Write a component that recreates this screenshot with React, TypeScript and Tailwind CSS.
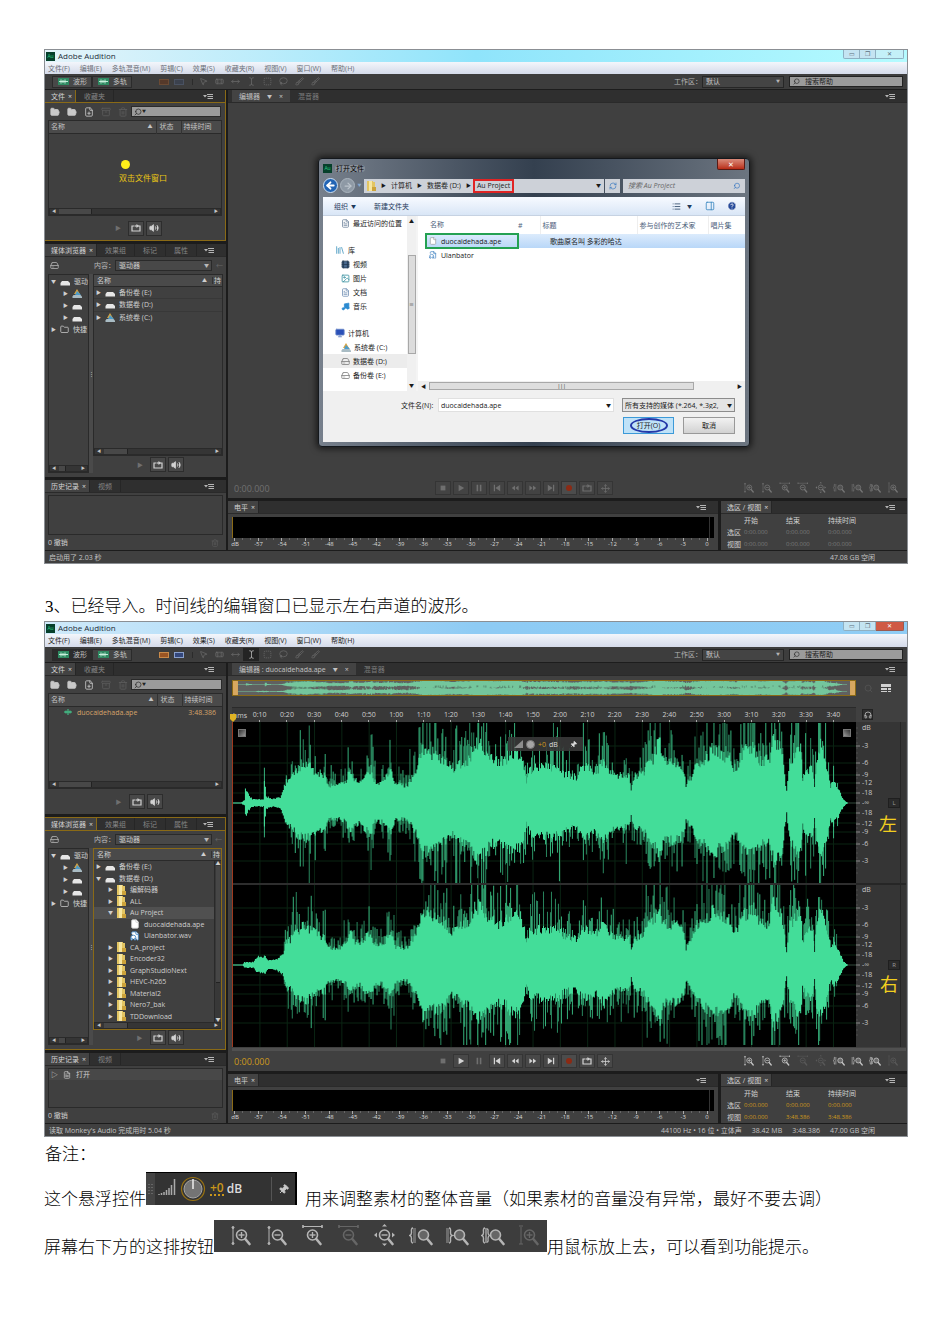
import type { ReactNode } from "react";
import {
  Archive, File, FileAudio, Folder, FolderOpen, HardDrive, Headphones, Image,
  Film, FileText, Monitor, Music, Pin, Trash2, Volume2, Search, HelpCircle, List, PanelRight,
  ArrowLeft, ArrowRight, RefreshCw, Library, Lasso, Brush, Bandage, TextCursor, Move,
  SquareDashed, MoveHorizontal, FilePlus, MousePointer2,
} from "lucide-react";

/* ---------- waveform ---------- */

type Point = [number, number];

const LEFT_ENVELOPE: Point[] = [
  [0, 0], [8, 0], [12, 3], [13, 15], [16, 9], [20, 4], [31, 4], [32, 27], [34, 7], [40, 4], [48, 6], [51, 14],
  [54, 24], [58, 27], [65, 36], [72, 42], [78, 38], [86, 32], [93, 30], [96, 18], [108, 19], [114, 22], [118, 37],
  [122, 26], [128, 22], [133, 30], [139, 36], [142, 22], [150, 22], [159, 34], [164, 20], [175, 18], [180, 27],
  [185, 36], [191, 58], [198, 54], [210, 48], [219, 36], [222, 36], [232, 44], [237, 45], [243, 62], [252, 60],
  [258, 50], [265, 44], [275, 47], [280, 54], [288, 54], [293, 36], [295, 22], [298, 36], [315, 38], [328, 38],
  [332, 31], [345, 28], [352, 38], [365, 34], [373, 44], [377, 34], [382, 30], [398, 28], [400, 15], [403, 28],
  [412, 32], [417, 41], [423, 49], [428, 66], [432, 45], [448, 42], [453, 35], [455, 18], [460, 28], [465, 41],
  [472, 46], [483, 58], [492, 50], [498, 50], [503, 37], [506, 38], [512, 54], [523, 58], [528, 46], [538, 45],
  [543, 68], [551, 55], [554, 30], [556, 12], [559, 42], [570, 60], [572, 25], [576, 36], [582, 36], [584, 15],
  [586, 50], [590, 60], [597, 35], [600, 18], [603, 24], [608, 15], [613, 4], [617, 0], [626, 0],
];

const RIGHT_ENVELOPE: Point[] = [
  [0, 0], [10, 0], [12, 3], [21, 3], [25, 9], [33, 9], [36, 5], [44, 6], [50, 10], [53, 20],
  ...LEFT_ENVELOPE.filter(([x]) => x > 53),
];

function levelAt(points: Point[], x: number) {
  const next = points.findIndex(([px]) => px > x);
  if (next <= 0) return 0;
  const [x0, y0] = points[next - 1];
  const [x1, y1] = points[next];
  return y0 + ((y1 - y0) * (x - x0)) / (x1 - x0);
}

function randomSource(seed: number) {
  let s = seed;
  return () => {
    s = (s * 1664525 + 1013904223) % 4294967296;
    return s / 4294967296;
  };
}

function wavePaths(points: Point[], middle: number, limit: number, seed: number) {
  const rnd = randomSource(seed);
  let core = "";
  let bright = "";
  let dim = "";
  for (let x = 0; x < 618; x++) {
    const level = (levelAt(points, x) * limit) / 80;
    const loud = level > limit * 0.19;
    const up = Math.max(0.4, level * (0.8 + rnd() * 0.28));
    const down = Math.max(0.4, level * (0.74 + rnd() * 0.26));
    core += `M${x + 0.5} ${(middle - up).toFixed(1)}V${(middle + down).toFixed(1)}`;
    if (loud && rnd() < 0.52) {
      const reach = rnd() < 0.3 ? 1.2 : 0.7;
      const a = Math.min(limit, up * (1.1 + rnd() * reach));
      const b = Math.min(limit, down * (1.1 + rnd() * reach));
      const seg = `M${x + 0.5} ${(middle - a).toFixed(1)}V${(middle + b).toFixed(1)}`;
      if (rnd() < 0.5) bright += seg;
      else dim += seg;
    }
  }
  return { core, bright, dim };
}

const LEFT_WAVE = wavePaths(LEFT_ENVELOPE, 81, 80, 11);
const RIGHT_WAVE = wavePaths(RIGHT_ENVELOPE, 243, 80, 57);
const LEFT_MINI = wavePaths(LEFT_ENVELOPE, 4, 7, 5);
const RIGHT_MINI = wavePaths(RIGHT_ENVELOPE, 12, 7, 9);

function Wave({ wave, color, shade }: { wave: { core: string; bright: string; dim: string }; color: string; shade: string }) {
  return (
    <g strokeWidth="1.05" fill="none">
      <path d={wave.dim} stroke={shade} />
      <path d={wave.bright} stroke={color} strokeWidth="0.8" />
      <path d={wave.core} stroke={color} />
    </g>
  );
}

const GRID_OFFSETS = [-57, -40, -28, -20, -10, 10, 20, 29, 41, 58];

function WaveDisplay() {
  const columns = Array.from({ length: 22 }, (_, i) => 28 + i * 27.4);
  return (
    <svg viewBox="0 0 626 325" preserveAspectRatio="none" className="block h-[325px] w-full bg-black" role="img" aria-label="波形">
      <g stroke="#0a2413" strokeWidth="1">
        {columns.map((x) => <path key={x} d={`M${x} 0V325`} />)}
        {[81, 243].map((m) => GRID_OFFSETS.map((o) => <path key={m + o} d={`M0 ${m + o}H626`} />))}
      </g>
      <path d="M0 81H626M0 243H626" stroke="#4a6a58" strokeWidth="0.7" />
      <Wave wave={LEFT_WAVE} color="#43dd99" shade="#27805a" />
      <Wave wave={RIGHT_WAVE} color="#43dd99" shade="#27805a" />
      <path d="M0 162H626" stroke="#2e2e2e" strokeWidth="2" />
      <path d="M0.5 0V325" stroke="#a03a20" strokeWidth="1" />
    </svg>
  );
}

const SCALE: [string, number][] = [
  ["dB", 6], ["-3", 24], ["-6", 41], ["-9", 53], ["-12", 61], ["-18", 71], ["-∞", 81], ["-18", 91], ["-12", 102], ["-9", 110], ["-6", 122], ["-3", 139],
];

function AmplitudeScale() {
  return (
    <svg viewBox="0 0 50 325" className="block h-[325px] w-[50px] bg-[#353535]" role="img" aria-label="dB">
      {[0, 162].map((base) => (
        <g key={base}>
          {SCALE.map(([t, y]) => (
            <g key={y}>
              {t !== "dB" && <path d={`M0 ${base + y}H4`} stroke="#8a8a8a" />}
              <text x="6" y={base + y + 2} fontSize="7" fill="#c8c8c8">{t}</text>
            </g>
          ))}
          {Array.from({ length: 30 }, (_, i) => <path key={i} d={`M0 ${base + 6 + i * 5}H2`} stroke="#5d5d5d" strokeWidth="0.6" />)}
        </g>
      ))}
      <path d="M0 162H50" stroke="#262626" strokeWidth="2" />
      <path d="M44.500 0V325" stroke="#262626" />
    </svg>
  );
}

/* ---------- zoom icons ---------- */

const ZOOM_KINDS = ["inV", "outV", "inH", "outH", "full", "selL", "selR", "sel", "reset"] as const;
type ZoomKind = (typeof ZOOM_KINDS)[number];

const ZOOM_TITLES: Record<ZoomKind, string> = {
  inV: "放大振幅", outV: "缩小振幅", inH: "放大时间", outH: "缩小时间", full: "全部缩小",
  selL: "放大入点", selR: "放大出点", sel: "缩放至选区", reset: "重置",
};

function ZoomGlyph({ kind, className }: { kind: ZoomKind; className: string }) {
  const shift = kind === "selL" || kind === "selR" || kind === "sel" ? 3 : kind === "inV" || kind === "outV" || kind === "reset" ? 1 : 0;
  const plus = kind === "inV" || kind === "inH" || kind === "reset";
  const minus = plus || kind === "outV" || kind === "outH" || kind === "full";
  return (
    <svg viewBox="0 0 24 24" className={className} fill="none" stroke="currentColor" aria-hidden="true">
      <g transform={`translate(${shift} 0)`}>
        <circle cx="11.500" cy="11" r="5" strokeWidth="1.600" fill={minus ? "none" : "currentColor"} fillOpacity="0.35" />
        <path d="M15.300 15L19.500 20" strokeWidth="2.600" strokeLinecap="round" />
        {minus && <path d="M8.500 11H14.500" strokeWidth="1.400" />}
        {plus && <path d="M11.500 8V14" strokeWidth="1.400" />}
      </g>
      {(kind === "inV" || kind === "outV") && (
        <g><path d="M4 3V20" strokeWidth="1" /><circle cx="4" cy="3.500" r="1" fill="currentColor" /><circle cx="4" cy="19.500" r="1" fill="currentColor" /></g>
      )}
      {(kind === "inH" || kind === "outH") && (
        <g><path d="M2 2.500H21" strokeWidth="1" /><path d="M2 1V4M21 1V4" strokeWidth="1.600" /></g>
      )}
      {kind === "reset" && <path d="M4 3V20M2 2H6M2 20H6" strokeWidth="1" />}
      {kind === "full" && (
        <g fill="currentColor" stroke="none"><path d="M11.500 0L14 2.500H9ZM11.500 22L14 19.500H9ZM1 11L4 8.500V13.500ZM22 11L19 8.500V13.500Z" /></g>
      )}
      {(kind === "selL" || kind === "sel") && <path d="M4 4Q2 4 2.500 8Q2.700 11 0.800 11.500Q2.700 12 2.500 15Q2 19 4 19" strokeWidth="1.400" />}
      {kind === "selL" && <path d="M4 4H7V19H4Z" fill="currentColor" fillOpacity="0.4" stroke="none" />}
      {kind === "selR" && (
        <g><path d="M1 4H4V19H1Z" fill="currentColor" fillOpacity="0.4" stroke="none" /><path d="M4 4Q6 4 5.500 8Q5.300 11 7.200 11.500Q5.300 12 5.500 15Q6 19 4 19" strokeWidth="1.400" /></g>
      )}
      {kind === "sel" && <path d="M5 4V19M6 5Q7.500 5 7 8Q7 11 8.600 11.500Q7 12 7 15Q7.500 18 6 18" strokeWidth="1.300" />}
    </svg>
  );
}

/* ---------- small shared parts ---------- */

function PanelMenu() {
  return (
    <svg viewBox="0 0 10 6" className="h-[6px] w-[10px] shrink-0" fill="#b5b5b5" aria-hidden="true">
      <path d="M0 2H4L2 4.500ZM4 1H10V2H4ZM4.500 3H10V4H4.500ZM4.500 5H10V6H4.500Z" />
    </svg>
  );
}

function TabBar({ tabs, active = false }: { tabs: string[]; active?: boolean }) {
  return (
    <div className={`flex h-[13px] shrink-0 items-stretch border-b bg-[#2f2f2f] ${active ? "border-[#8a6a16]" : "border-[#2a2a2a]"}`}>
      {tabs.map((t, i) => (
        <button
          key={t}
          type="button"
          className={`flex items-center whitespace-nowrap border-r leading-none ${
            i === 0
              ? `bg-[#434343] pl-[6px] pr-[3px] text-[#d4d4d4] ${active ? "border-[#8a6a16]" : "border-[#262626]"}`
              : "border-[#262626] px-[8px] text-[#858585]"
          }`}
        >
          {t}
          {i === 0 && <span className="pl-[3px]">×</span>}
        </button>
      ))}
      <div className="flex flex-1 items-center justify-end pr-[12px]"><PanelMenu /></div>
    </div>
  );
}

function HScroll() {
  return (
    <div className="flex h-[7px] shrink-0 items-center justify-between border border-[#2a2a2a] bg-[#353535] px-[2px] text-[4px] leading-none text-[#c4c4c4]">
      <span>◀</span>
      <span className="ml-[3px] h-[5px] w-1/5 border-r border-[#222] bg-[#484848]" />
      <span className="flex-1 text-right">▶</span>
    </div>
  );
}

function PreviewButtons() {
  const box = "flex h-[15px] w-[16px] items-center justify-center border border-[#2d2d2d] bg-[#484848] text-[#d2d2d2]";
  return (
    <div className="flex items-center gap-[2px]">
      <button type="button" aria-label="播放" className="flex h-[15px] w-[16px] items-center justify-center text-[6px] text-[#6f6f6f]">▶</button>
      <button type="button" aria-label="循环播放" className={box}><LoopGlyph /></button>
      <button type="button" aria-label="自动播放" className={box}><Volume2 size={10} fill="currentColor" /></button>
    </div>
  );
}

function LoopGlyph() {
  return (
    <svg viewBox="0 0 10 8" className="h-[8px] w-[10px]" fill="none" stroke="currentColor" strokeWidth="1.200" aria-hidden="true">
      <path d="M3 2H1V7H9V2H7" /><path d="M3.500 2H6" /><path d="M5.500 0L8 2L5.500 4Z" fill="currentColor" stroke="none" />
    </svg>
  );
}

function DriveGlyph({ system = false }: { system?: boolean }) {
  return (
    <svg viewBox="0 0 10 9" className="h-[9px] w-[10px] shrink-0" aria-hidden="true">
      {system && <path d="M2 5L5 0L8 5Z" fill="#d9a441" />}
      {system && <path d="M5 2L9 6H3Z" fill="#4d9cc9" />}
      <path d={system ? "M1.500 6H8.500L10 7.500V9H0.500V7.500Z" : "M2 4H8L10 6V8.500H0.500V6Z"} fill={system ? "#a9bcc4" : "#e6e6e6"} />
    </svg>
  );
}

function FolderGlyph() {
  return (
    <svg viewBox="0 0 9 10" className="h-[10px] w-[9px] shrink-0" aria-hidden="true">
      <path d="M0 0H6V1H8V10H0Z" fill="#e3c562" /><path d="M2 0H5V10H2Z" fill="#f6e6a2" /><path d="M5 6H9V10H5Z" fill="#cda33a" />
    </svg>
  );
}

function AuLogo() {
  return <span className="flex size-[9px] shrink-0 items-center justify-center bg-[#06402b] text-[5px] leading-none text-[#2fd08a]">Au</span>;
}

/* ---------- window chrome ---------- */

const MENUS = ["文件(F)", "编辑(E)", "多轨混音(M)", "剪辑(C)", "效果(S)", "收藏夹(R)", "视图(V)", "窗口(W)", "帮助(H)"];

function TitleBar({ loaded }: { loaded: boolean }) {
  return (
    <div className={`flex h-[12px] items-center gap-[3px] pl-[1px] text-[8px] leading-none text-[#1c2c38] ${
      loaded ? "bg-linear-to-r from-[#cfeafa] via-[#8ecbf4] to-[#8fcdf5]" : "bg-linear-to-r from-[#e4f4fa] via-[#8fe4fb] to-[#b5fbff]"
    }`}>
      <AuLogo />
      <span className="flex-1">Adobe Audition</span>
      <div className="flex h-[9px] self-start pr-[3px] text-[6px] leading-none text-[#5c6e7c]">
        <button type="button" aria-label="最小化" className="w-[17px] rounded-bl-[2px] border border-t-0 border-[#8fb0c2] bg-[#c4e4f2]">▭</button>
        <button type="button" aria-label="还原" className="w-[16px] border border-l-0 border-t-0 border-[#8fb0c2] bg-[#c4e4f2]">❐</button>
        <button type="button" aria-label="关闭" className={`w-[28px] rounded-br-[2px] border border-l-0 border-t-0 ${loaded ? "border-[#9a5a50] bg-[#cf5a45] text-white" : "border-[#8fb0c2] bg-[#c4f0f8]"}`}>✕</button>
      </div>
    </div>
  );
}

function MenuBar({ loaded }: { loaded: boolean }) {
  return (
    <nav className={`flex items-center gap-[10px] bg-linear-to-b from-[#f3f6fb] to-[#d5dbea] pl-[3px] ${loaded ? "h-[13px] text-[#1c1c1c]" : "h-[12px] text-[#6c7078]"}`}>
      {MENUS.map((m) => <button key={m} type="button" className="whitespace-nowrap leading-none">{m}</button>)}
    </nav>
  );
}

function WaveGlyph() {
  return (
    <svg viewBox="0 0 11 7" className="h-[7px] w-[11px]" aria-hidden="true">
      <path d="M0 0H11V7H0Z" fill="#2f8a62" /><path d="M1 3.500H10M3 1.500V5.500M5 2V5M7 1.500V5.500" stroke="#d4f5e4" strokeWidth="0.9" />
    </svg>
  );
}

function Toolbar({ loaded }: { loaded: boolean }) {
  const tools = [MousePointer2, Bandage, MoveHorizontal, TextCursor, SquareDashed, Lasso, Brush, Brush];
  const mode = "flex h-[12px] items-center gap-[4px] border border-[#2b2b2b] pl-[5px] pr-[4px] leading-none text-[#c4c4c4]";
  return (
    <div className="flex h-[16px] items-center border-b border-[#1d1d1d] bg-[#3d3d3d] pl-[7px] pr-[4px]">
      <button type="button" className={`${mode} ${loaded ? "bg-[#2c2c2c]" : "bg-[#484848]"}`}><WaveGlyph />波形</button>
      <button type="button" className={`${mode} bg-[#444]`}><WaveGlyph />多轨</button>
      <div className="ml-[27px] flex w-[34px] items-center gap-[5px] border-r border-[#2b2b2b]">
        <span className={`h-[6px] w-[10px] border ${loaded ? "border-[#c98a4a] bg-[#9b5524]" : "border-[#6a4a34] bg-[#55392a]"}`} />
        <span className={`h-[6px] w-[10px] border ${loaded ? "border-[#8aa0cc] bg-[#33477c]" : "border-[#4a5262] bg-[#3b414d]"}`} />
      </div>
      <div className="ml-[2px] flex items-center text-[#6a6a6a]">
        {tools.map((T, i) => (
          <button key={i} type="button" aria-label={`工具 ${i + 1}`} className={`flex h-[13px] w-[16px] items-center justify-center ${loaded && i === 3 ? "bg-[#242424] text-[#bbb]" : ""}`}><T size={9} /></button>
        ))}
      </div>
      <label className="ml-auto flex items-center leading-none text-[#b5b5b5]">
        工作区：
        <span className="relative flex w-[82px] items-center">
          <select className="h-[12px] w-full appearance-none border border-[#262626] bg-[#444] px-[3px] leading-none text-[#c8c8c8]"><option>默认</option></select>
          <span className="pointer-events-none absolute right-[4px] text-[4px]">▼</span>
        </span>
      </label>
      <label className="ml-[5px] flex h-[11px] w-[114px] items-center gap-[5px] border border-[#222] bg-[#9b9b9b] px-[3px] text-[#222]">
        <Search size={7} className="shrink-0 -scale-x-100" />
        <input aria-label="搜索帮助" placeholder="搜索帮助" className="w-full min-w-0 bg-transparent leading-none placeholder:text-[#222]" />
      </label>
    </div>
  );
}

/* ---------- left column ---------- */

function FilesPanel({ loaded }: { loaded: boolean }) {
  const icons = [FolderOpen, FolderOpen, FilePlus, Archive, Trash2];
  return (
    <section className={`flex h-[151px] flex-col bg-[#404040] ${loaded ? "" : "border-b border-r border-[#8a6a16]"}`}>
      <TabBar tabs={["文件", "收藏夹"]} active={!loaded} />
      <div className="flex h-[17px] items-center pl-[1px] pr-[4px]">
        {icons.map((I, i) => (
          <button key={i} type="button" aria-label={`文件操作 ${i + 1}`} className={`flex w-[17px] justify-center ${i > 2 ? "text-[#5c5c5c]" : "text-[#c9c9c9]"}`}>
            <I size={10} fill={i < 2 ? "currentColor" : "none"} />
          </button>
        ))}
        <label className="flex h-[11px] flex-1 items-center border border-[#2a2a2a] bg-[#9b9b9b] px-[2px] text-[#222]">
          <Search size={8} className="shrink-0 -scale-x-100" /><span className="text-[4px]">▼</span>
          <input aria-label="筛选文件" className="w-full min-w-0 bg-transparent" />
        </label>
      </div>
      <div className="mx-[3px] flex h-[96px] flex-col border border-[#2a2a2a]">
        <table className="w-full table-fixed text-left leading-none">
          <colgroup><col /><col className="w-[25px]" /><col className="w-[40px]" /></colgroup>
          <thead>
            <tr className="h-[12px] border-b border-[#2a2a2a] bg-[#4a4a4a] text-[#c4c4c4]">
              <th className="pl-[2px] font-normal"><span className="flex items-center justify-between pr-[3px]">名称<span className="text-[5px]">▲</span></span></th>
              <th className="border-l border-[#333] pl-[3px] font-normal">状态</th>
              <th className="border-l border-[#333] pl-[2px] font-normal">持续时间</th>
            </tr>
          </thead>
          {loaded && (
            <tbody>
              <tr className="h-[12px] text-[#d6a36a]">
                <td className="whitespace-nowrap pl-[15px]"><span className="flex items-center gap-[5px]">
                  <svg viewBox="0 0 8 6" className="h-[6px] w-[8px]" stroke="#43dd99" strokeWidth="0.9" aria-hidden="true"><path d="M0 3H8M2 1.500V4.500M4 0V6M6 1.500V4.500" /></svg>
                  duocaidehada.ape
                </span></td>
                <td /><td className="pr-[6px] text-right">3:48.386</td>
              </tr>
            </tbody>
          )}
        </table>
        <div className="flex flex-1 flex-col items-center justify-center gap-[5px] pl-[16px]">
          {!loaded && <span className="mr-[36px] size-[9px] rounded-full bg-[#fff01a]" />}
          {!loaded && <span className="text-[8px] leading-none text-[#ecc814]">双击文件窗口</span>}
        </div>
        <HScroll />
      </div>
      <div className="flex flex-1 items-center justify-center pl-[2px]"><PreviewButtons /></div>
    </section>
  );
}

function TreeRow({ indent = 0, icon, label, open = false, leaf = false, selected = false }: {
  indent?: number; icon: ReactNode; label?: string; open?: boolean; leaf?: boolean; selected?: boolean;
}) {
  const pad = ["pl-[2px]", "pl-[14px]", "pl-[27px]"][indent];
  return (
    <li className={`flex min-h-0 flex-1 items-center gap-[4px] whitespace-nowrap leading-none ${pad} ${selected ? "bg-[#505050]" : ""}`}>
      <span className="w-[5px] shrink-0 text-[5px]">{leaf ? "" : open ? "▼" : "▶"}</span>
      {icon}
      {label && <span>{label}</span>}
    </li>
  );
}

const FOLDERS_BEFORE = ["编解码器", "ALL"];
const FOLDERS_AFTER = ["CA_project", "Encoder32", "GraphStudioNext", "HEVC-h265", "Material2", "Nero7_bak", "TDDownload"];

function MediaPanel({ loaded }: { loaded: boolean }) {
  return (
    <section className={`flex h-[233px] flex-col bg-[#404040] ${loaded ? "border border-l-0 border-[#8a6a16]" : ""}`}>
      <TabBar tabs={["媒体浏览器", "效果组", "标记", "属性"]} active={loaded} />
      <div className="flex h-[17px] items-center pl-[5px] pr-[3px] text-[#b9b9b9]">
        <HardDrive size={9} />
        <label className="ml-[35px] flex flex-1 items-center whitespace-nowrap leading-none">
          内容：
          <span className="relative flex w-[97px] items-center">
            <select className="h-[11px] w-full appearance-none border border-[#2a2a2a] bg-[#484848] px-[3px] leading-none text-[#cfcfcf]"><option>驱动器</option></select>
            <span className="pointer-events-none absolute right-[3px] text-[5px]">▼</span>
          </span>
        </label>
        <span className="text-[#666]">←</span>
      </div>
      <div className="flex min-h-0 flex-1 px-[3px] pb-[4px] text-[#cfcfcf]">
        <div className="flex w-[41px] shrink-0 flex-col justify-between border border-[#2a2a2a]">
          <ul className="flex h-[60px] flex-col">
            <TreeRow open icon={<DriveGlyph />} label="驱动" />
            <TreeRow indent={1} icon={<DriveGlyph system />} />
            <TreeRow indent={1} icon={<DriveGlyph />} />
            <TreeRow indent={1} icon={<DriveGlyph />} />
            <TreeRow icon={<Folder size={9} className="shrink-0" />} label="快捷" />
          </ul>
          <HScroll />
        </div>
        <div className="flex w-[4px] shrink-0 items-center justify-center bg-[#4a4a4a] text-[5px]">⋮</div>
        <div className="flex min-w-0 flex-1 flex-col">
          <div className={`flex h-[182px] flex-col border ${loaded ? "border-[#8a6a16]" : "border-[#2a2a2a]"}`}>
            <div className="flex h-[12px] shrink-0 items-center border-b border-[#2a2a2a] bg-[#4a4a4a] pl-[3px] leading-none">
              <span className="flex-1">名称</span><span className="pr-[5px] text-[5px]">▲</span><span className="border-l border-[#333] px-px">持</span>
            </div>
            {loaded ? (
              <div className="flex min-h-0 flex-1">
                <ul className="flex min-w-0 flex-1 flex-col">
                  <TreeRow icon={<DriveGlyph />} label="备份卷 (E:)" />
                  <TreeRow open icon={<DriveGlyph />} label="数据卷 (D:)" />
                  {FOLDERS_BEFORE.map((f) => <TreeRow key={f} indent={1} icon={<FolderGlyph />} label={f} />)}
                  <TreeRow indent={1} open selected icon={<FolderGlyph />} label="Au Project" />
                  <TreeRow indent={2} leaf icon={<File size={10} fill="#fff" className="shrink-0" />} label="duocaidehada.ape" />
                  <TreeRow indent={2} leaf icon={<FileAudio size={10} fill="#fff" className="shrink-0 text-[#3b7fc0]" />} label="Ulanbator.wav" />
                  {FOLDERS_AFTER.map((f) => <TreeRow key={f} indent={1} icon={<FolderGlyph />} label={f} />)}
                </ul>
                <div className="flex w-[7px] flex-col justify-between border-l border-[#2a2a2a] bg-[#383838] text-center text-[5px] leading-none"><span>▲</span><span className="mx-px mb-[34px] flex-1 border-b border-[#222] bg-[#464646]" /><span>▼</span></div>
              </div>
            ) : (
              <ul className="flex h-[36px] flex-col divide-y divide-[#383838]">
                <TreeRow icon={<DriveGlyph />} label="备份卷 (E:)" />
                <TreeRow icon={<DriveGlyph />} label="数据卷 (D:)" />
                <TreeRow icon={<DriveGlyph system />} label="系统卷 (C:)" />
              </ul>
            )}
            {!loaded && <div className="flex-1" />}
            <HScroll />
          </div>
          <div className="flex flex-1 items-center justify-center"><PreviewButtons /></div>
        </div>
      </div>
    </section>
  );
}

function HistoryPanel({ loaded }: { loaded: boolean }) {
  return (
    <section className="flex flex-1 flex-col bg-[#404040]">
      <TabBar tabs={["历史记录", "视频"]} />
      <div className="mx-[3px] mt-[2px] h-[40px] border border-[#2a2a2a]">
        {loaded && <div className="flex h-[11px] items-center gap-[5px] bg-[#484848] pl-[2px] leading-none text-[#cfcfcf]"><span>▷</span><FileText size={8} />打开</div>}
      </div>
      <div className="flex flex-1 items-center justify-between px-[3px] leading-none text-[#cfcfcf]">0 撤销<Trash2 size={8} className="mr-[4px] text-[#5c5c5c]" /></div>
    </section>
  );
}

/* ---------- right column ---------- */

const TRANSPORT: [string, string][] = [
  ["停止", "M2 2H8V8H2Z"], ["播放", "M2 1L9 5L2 9Z"], ["暂停", "M2 1H4V9H2ZM6 1H8V9H6Z"], ["上一个", "M1 1H2.500V9H1ZM9 1V9L3 5Z"],
  ["快退", "M5 2V8L1 5ZM9.500 2V8L5.500 5Z"], ["快进", "M5 2V8L9 5ZM0.500 2V8L4.500 5Z"], ["下一个", "M7.500 1H9V9H7.500ZM1 1V9L7 5Z"],
];

function EditorFooter({ loaded }: { loaded: boolean }) {
  const tone = loaded ? "bg-[#484848] text-[#d5d5d5]" : "bg-[#434343] text-[#6f6f6f]";
  const cell = "flex h-[14px] w-[16px] items-center justify-center border border-[#353535]";
  return (
    <div className="flex h-[20px] shrink-0 items-center px-[6px]">
      <span className={`w-[201px] text-[9px] leading-none ${loaded ? "text-[#cf9a1c]" : "text-[#707070]"}`}>0:00.000</span>
      <div className="flex gap-[2px]">
        {TRANSPORT.map(([name, d], i) => (
          <button key={name} type="button" aria-label={name} className={`${cell} ${loaded && (i === 0 || i === 2) ? "border-transparent text-[#6f6f6f]" : tone}`}>
            <svg viewBox="0 0 10 10" className="size-[8px]" fill="currentColor"><path d={d} /></svg>
          </button>
        ))}
        <button type="button" aria-label="录制" className={`${cell} border-[#222] bg-[#4c4c4c]`}><span className="size-[6px] rounded-full bg-[#8c2a14]" /></button>
        <button type="button" aria-label="循环" className={`${cell} ${tone}`}><LoopGlyph /></button>
        <button type="button" aria-label="跳过选区" className={`${cell} ${tone}`}><Move size={9} /></button>
      </div>
      <div className="ml-auto flex gap-[6px] pr-[2px]">
        {ZOOM_KINDS.map((k, i) => (
          <button key={k} type="button" aria-label={ZOOM_TITLES[k]} className={loaded && ![3, 4, 8].includes(i) ? "text-[#c4c4c4]" : loaded ? "text-[#595959]" : "text-[#757575]"}>
            <ZoomGlyph kind={k} className="size-[12px]" />
          </button>
        ))}
      </div>
    </div>
  );
}

function FloatingGain() {
  return (
    <div className="absolute left-[276px] top-[15px] flex h-[14px] w-[75px] items-center gap-[3px] bg-[#3a3a3a]/90 px-[6px] text-[7px] leading-none">
      <svg viewBox="0 0 9 8" className="h-[8px] w-[9px]" aria-hidden="true"><path d="M0 8L9 0V8Z" fill="#8c8c8c" /></svg>
      <span className="size-[9px] rounded-full border border-[#777] bg-[#a5a5a5]" />
      <span className="text-[#cf9a1c]">+0</span><span className="text-[#ddd]">dB</span>
      <Pin size={7} fill="currentColor" className="ml-auto rotate-45 text-[#ddd]" />
    </div>
  );
}

const TIMES = Array.from({ length: 22 }, (_, i) => `${Math.floor((i + 1) / 6)}:${((i + 1) % 6) * 10 || "00"}`);

function Editor({ loaded }: { loaded: boolean }) {
  return (
    <section className="flex h-[409px] flex-col bg-[#404040]">
      <div className="flex h-[13px] shrink-0 items-center border-b border-[#2a2a2a] bg-[#2f2f2f] pl-[4px] leading-none">
        <button type="button" className="flex h-full items-center gap-[7px] bg-[#434343] px-[7px] text-[#c4c4c4]">{loaded ? "编辑器 : duocaidehada.ape" : "编辑器"}<span className="text-[5px]">▼</span><span>×</span></button>
        <button type="button" className="px-[8px] text-[#7c7c7c]">混音器</button>
        <span className="ml-auto pr-[12px]"><PanelMenu /></span>
      </div>
      {loaded ? (
        <div className="min-h-0 flex-1 pl-[4px] pr-[1px]">
          <div className="flex h-[31px] items-start pt-[4px]">
            <div className="h-[16px] min-w-0 flex-1 border border-[#8a6a16] bg-[#606060]">
              <svg viewBox="0 0 626 16" preserveAspectRatio="none" className="block h-full w-full" aria-hidden="true">
                <Wave wave={LEFT_MINI} color="#74c69c" shade="#568a70" />
                <Wave wave={RIGHT_MINI} color="#74c69c" shade="#568a70" />
                <path d="M0 0H5V16H0ZM621 0H626V16H621Z" fill="#d8a860" />
              </svg>
            </div>
            <div className="flex w-[50px] items-center gap-[8px] pl-[8px] pt-[3px]">
              <Search size={9} className="text-[#555]" />
              <svg viewBox="0 0 10 10" className="size-[10px]" fill="#d0d0d0" aria-hidden="true"><path d="M0 1H10V4H0ZM0 5H6V7H0ZM7 5H10V7H7ZM0 8H6V9H0ZM7 8H10V9H7Z" /></svg>
            </div>
          </div>
          <div className="flex">
            <div className="min-w-0 flex-1">
              <div className="relative flex h-[15px] items-center border-t border-[#2a2a2a] bg-[#383838] pr-[9px] text-[7px] leading-none text-[#cfcfcf]">
                <span className="w-[14px] pl-[1px]">hms</span>
                <div className="grid h-full flex-1 grid-cols-22 text-center">
                  {TIMES.map((t) => <span key={t} className="flex flex-col items-center justify-between pt-[3px]">{t}<i className="h-[2px] w-px bg-[#aaa]" /></span>)}
                </div>
                <svg viewBox="0 0 8 8" className="absolute -left-[3px] bottom-0 size-[8px]" aria-hidden="true"><path d="M1 0H7V5L4 8L1 5Z" fill="#dfb224" /></svg>
              </div>
              <div className="relative">
                <WaveDisplay />
                <span className="absolute left-[6px] top-[7px] size-[8px] border border-[#777] bg-linear-to-br from-[#333] to-[#999]" />
                <span className="absolute right-[5px] top-[7px] size-[8px] border border-[#777] bg-linear-to-bl from-[#333] to-[#999]" />
                <FloatingGain />
              </div>
            </div>
            <div className="w-[50px] shrink-0">
              <div className="flex h-[15px] items-center pl-[6px]"><span className="flex size-[11px] items-center justify-center border border-[#222] bg-[#2f2f2f] text-[#ddd]"><Headphones size={8} /></span></div>
              <div className="relative">
                <AmplitudeScale />
                <span className="absolute left-[32px] top-[76px] flex h-[10px] w-[12px] items-center justify-center border border-[#1f1f1f] bg-[#2b2b2b] text-[6px] leading-none text-[#999]">L</span>
                <span className="absolute left-[32px] top-[238px] flex h-[10px] w-[12px] items-center justify-center border border-[#1f1f1f] bg-[#2b2b2b] text-[6px] leading-none text-[#999]">R</span>
                <span className="absolute left-[23px] top-[93px] text-[18px] leading-none text-[#f2cf1f]">左</span>
                <span className="absolute left-[24px] top-[253px] text-[18px] leading-none text-[#f2cf1f]">右</span>
              </div>
            </div>
          </div>
          <div className="mt-[1px] h-[3px] bg-[#505050]" />
        </div>
      ) : (
        <div className="flex-1" />
      )}
      <EditorFooter loaded={loaded} />
    </section>
  );
}

const LEVELS = ["dB", ...Array.from({ length: 19 }, (_, i) => String(-57 + i * 3)), "0"];

function LevelsPanel() {
  return (
    <section className="flex min-w-0 flex-1 flex-col bg-[#404040]">
      <TabBar tabs={["电平"]} />
      <div className="mx-[4px] mt-[3px] flex h-[21px] border-l border-[#8a6a16] bg-black"><span className="ml-auto mr-[4px] w-px bg-[#333]" /></div>
      <div className="mx-[4px] flex h-[3px] justify-between pl-[2px] pr-[6px]">
        {Array.from({ length: 61 }, (_, i) => <span key={i} className={`w-px ${i % 3 === 0 ? "bg-[#aaa]" : "h-[2px] bg-[#666]"}`} />)}
      </div>
      <div className="flex justify-between pl-[1px] pr-[5px] text-[6px] leading-none text-[#d8d8d8]">
        {LEVELS.map((l) => <span key={l} className="w-[12px] text-center">{l}</span>)}
      </div>
    </section>
  );
}

function SelectionPanel({ loaded }: { loaded: boolean }) {
  const rows: [string, string[]][] = [
    ["选区", ["0:00.000", "0:00.000", "0:00.000"]],
    ["视图", loaded ? ["0:00.000", "3:48.386", "3:48.386"] : ["0:00.000", "0:00.000", "0:00.000"]],
  ];
  return (
    <section className="flex w-[186px] shrink-0 flex-col bg-[#404040]">
      <TabBar tabs={["选区 / 视图"]} />
      <table className="ml-[6px] w-[143px] table-fixed text-left text-[7px] leading-none text-[#d0d0d0]">
        <colgroup><col className="w-[17px]" /><col /><col /><col /></colgroup>
        <thead><tr className="h-[12px]"><td /><th className="font-normal">开始</th><th className="font-normal">结束</th><th className="whitespace-nowrap font-normal">持续时间</th></tr></thead>
        <tbody>
          {rows.map(([name, values]) => (
            <tr key={name} className="h-[12px]">
              <th className="font-normal">{name}</th>
              {values.map((v, i) => <td key={i} className={`text-[6px] ${loaded ? "text-[#cf9a1c]" : "text-[#7a7a7a]"}`}>{v}</td>)}
            </tr>
          ))}
        </tbody>
      </table>
    </section>
  );
}

function AuditionWindow({ loaded = false, status, info, children }: { loaded?: boolean; status: string; info: string[]; children?: ReactNode }) {
  return (
    <div className="relative border border-[#8b8f94] bg-[#1c1c1c] font-['Open_Sans','Noto_Sans_CJK_SC',sans-serif] text-[7px] font-normal">
      <TitleBar loaded={loaded} />
      <MenuBar loaded={loaded} />
      <Toolbar loaded={loaded} />
      <div className="flex h-[460px] gap-[2px]">
        <div className="flex w-[181px] shrink-0 flex-col gap-[3px]">
          <FilesPanel loaded={loaded} />
          <MediaPanel loaded={loaded} />
          <HistoryPanel loaded={loaded} />
        </div>
        <div className="flex min-w-0 flex-1 flex-col gap-[3px]">
          <Editor loaded={loaded} />
          <div className="flex flex-1 gap-[3px]"><LevelsPanel /><SelectionPanel loaded={loaded} /></div>
        </div>
      </div>
      <footer className="mt-px flex h-[12px] items-center justify-between bg-[#404040] pl-[4px] pr-[32px] leading-none text-[#c4c4c4]">
        <span>{status}</span>
        <span className="flex gap-[10px]">{info.map((t) => <span key={t}>{t}</span>)}</span>
      </footer>
      {children}
    </div>
  );
}

/* ---------- open dialog ---------- */

function SideItem({ icon, label, root = false, selected = false }: { icon: ReactNode; label: string; root?: boolean; selected?: boolean }) {
  return (
    <li className={`flex h-[14px] items-center gap-[3px] whitespace-nowrap leading-none ${root ? "pl-[12px]" : "pl-[18px]"} ${selected ? "bg-[#ececec]" : ""}`}>{icon}{label}</li>
  );
}

function OpenDialog() {
  return (
    <div role="dialog" aria-label="打开文件" className="absolute left-[273px] top-[108px] w-[432px] rounded-[4px] border border-[#14181d] bg-linear-to-r from-[#77808c] via-[#34404f] to-[#6c7580] px-[4px] pb-[4px] text-[7px] text-[#1a1a1a] shadow-[0_0_6px_2px_rgba(0,0,0,0.6)]">
      <div className="flex h-[18px] items-center gap-[3px]">
        <AuLogo />
        <span className="rounded bg-white/20 px-[1px] text-[7px] leading-none text-black">打开文件</span>
        <button type="button" aria-label="关闭" className="ml-auto h-[11px] w-[28px] self-start rounded-b-[2px] border border-t-0 border-[#5a1a14] bg-linear-to-b from-[#d98a7a] to-[#b82a14] text-[7px] leading-none text-white">✕</button>
      </div>
      <div className="flex h-[20px] items-center pb-[3px]">
        <button type="button" aria-label="后退" className="flex size-[15px] items-center justify-center rounded-full border border-[#cfe0f0] bg-[#2264b4] text-white"><ArrowLeft size={11} strokeWidth={4} /></button>
        <button type="button" aria-label="前进" className="ml-[2px] flex size-[15px] items-center justify-center rounded-full border border-[#aab4be] bg-[#8e99a5] text-[#bcc4cc]"><ArrowRight size={10} strokeWidth={3} /></button>
        <span className="w-[9px] text-center text-[4px] text-[#8ac]">▼</span>
        <div className="flex h-[14px] w-[240px] items-center bg-[#cdd1d8] pl-[3px] leading-none">
          <FolderGlyph />
          <span className="px-[5px] text-[5px]">▶</span><span>计算机</span>
          <span className="px-[5px] text-[5px]">▶</span><span>数据卷 (D:)</span>
          <span className="pl-[5px] pr-[2px] text-[5px]">▶</span>
          <span className="flex h-[14px] items-center whitespace-nowrap border-2 border-[#e02424] px-[2px]">Au Project</span>
          <span className="ml-auto pr-[3px] text-[5px]">▼</span>
        </div>
        <button type="button" aria-label="刷新" className="ml-px flex h-[14px] w-[15px] items-center justify-center bg-[#cdd1d8] text-[#3a78c0]"><RefreshCw size={8} /></button>
        <label className="ml-[3px] flex h-[14px] flex-1 items-center bg-[#cdd1d8] px-[5px]">
          <input aria-label="搜索 Au Project" placeholder="搜索 Au Project" className="w-full min-w-0 bg-transparent text-[7px] italic placeholder:text-[#666]" />
          <Search size={8} className="-scale-x-100 text-[#2c6fc0]" />
        </label>
      </div>
      <div className="bg-white">
        <div className="flex h-[19px] items-center border-b border-[#c6d2e2] bg-linear-to-b from-[#f7faff] to-[#d9e6f6] pl-[11px] pr-[8px] leading-none text-[#1e395b]">
          <button type="button" className="flex items-center gap-[3px]">组织<span className="text-[5px]">▼</span></button>
          <button type="button" className="ml-[18px]">新建文件夹</button>
          <button type="button" aria-label="视图" className="ml-auto flex items-center gap-[6px]"><List size={9} /><span className="text-[5px]">▼</span></button>
          <button type="button" aria-label="预览窗格" className="ml-[13px] text-[#3a88c0]"><PanelRight size={10} /></button>
          <button type="button" aria-label="帮助" className="ml-[12px] text-white"><HelpCircle size={10} fill="#274b9a" /></button>
        </div>
        <div className="flex h-[175px]">
          <ul className="w-[84px] shrink-0">
            <SideItem icon={<FileText size={9} className="text-[#6a7f98]" />} label="最近访问的位置" />
            <li className="h-[13px]" />
            <SideItem root icon={<Library size={10} className="text-[#4b9ac0]" />} label="库" />
            <SideItem icon={<Film size={9} fill="#4a6a90" className="text-[#203850]" />} label="视频" />
            <SideItem icon={<Image size={9} className="text-[#2c8a9a]" />} label="图片" />
            <SideItem icon={<FileText size={9} className="text-[#6a8ab0]" />} label="文档" />
            <SideItem icon={<Music size={9} fill="#2b8ad0" className="text-[#2b8ad0]" />} label="音乐" />
            <li className="h-[13px]" />
            <SideItem root icon={<Monitor size={10} fill="#2a50b8" className="text-[#6a88c8]" />} label="计算机" />
            <SideItem icon={<DriveGlyph system />} label="系统卷 (C:)" />
            <SideItem selected icon={<HardDrive size={9} className="text-[#777]" />} label="数据卷 (D:)" />
            <SideItem icon={<HardDrive size={9} className="text-[#777]" />} label="备份卷 (E:)" />
          </ul>
          <div className="flex w-[9px] shrink-0 flex-col items-center bg-[#f0f0f0] py-[3px] text-[5px] leading-none">
            <span>▲</span><span className="mt-[31px] flex h-[99px] w-[8px] items-center justify-center border border-[#a8a8a8] bg-[#dcdcdc]">≡</span><span className="mt-auto">▼</span>
          </div>
          <div className="flex min-w-0 flex-1 flex-col border-l-2 border-[#f4f4f4]">
            <table className="ml-[7px] w-[calc(100%-7px)] table-fixed border-collapse text-left leading-none">
              <colgroup><col className="w-[92px]" /><col className="w-[22px]" /><col className="w-[97px]" /><col className="w-[71px]" /><col /></colgroup>
              <thead>
                <tr className="h-[18px] whitespace-nowrap text-[#4c607a]">
                  <th className="pl-[4px] font-normal">名称</th><th className="font-normal">#</th><th className="border-l border-[#eee] pl-[2px] font-normal">标题</th><th className="border-l border-[#eee] pl-[2px] font-normal">参与创作的艺术家</th><th className="border-l border-[#eee] pl-[2px] font-normal">唱片集</th>
                </tr>
              </thead>
              <tbody>
                <tr className="h-[14px] whitespace-nowrap bg-linear-to-b from-[#dcebfc] to-[#b9d7f8]">
                  <td className="border-2 border-[#24a152]"><span className="flex items-center gap-[4px] pl-[2px]"><File size={8} fill="#fff" className="text-[#999]" />duocaidehada.ape</span></td>
                  <td /><td colSpan={3} className="pl-[10px]">歌曲原名叫 多彩的哈达</td>
                </tr>
                <tr className="h-[13px]">
                  <td><span className="flex items-center gap-[4px] pl-[3px]"><FileAudio size={8} className="text-[#3b7fc0]" />Ulanbator</span></td><td /><td /><td /><td />
                </tr>
              </tbody>
            </table>
            <div className="mt-auto flex h-[10px] items-center bg-[#f0f0f0] px-[3px] text-[5px] leading-none">
              <span>◀</span><span className="ml-[3px] flex h-[8px] w-[265px] items-center justify-center border border-[#a8a8a8] bg-[#dedede]">|||</span><span className="ml-auto">▶</span>
            </div>
          </div>
        </div>
      </div>
      <div className="flex flex-col gap-[5px] bg-[#f0f0f0] pb-[8px] pl-[78px] pr-[10px] pt-[7px] leading-none">
        <div className="flex items-center">
          <label htmlFor="file-name" className="w-[37px] whitespace-nowrap">文件名(N):</label>
          <div className="relative flex flex-1 items-center">
            <input id="file-name" defaultValue="duocaidehada.ape" className="h-[14px] w-full min-w-0 border border-[#e0e0e0] bg-white px-[2px] text-[7px] leading-none" />
            <span className="absolute right-[3px] text-[5px]">▼</span>
          </div>
          <div className="relative ml-[8px] flex w-[113px] items-center">
            <select aria-label="文件类型" className="h-[14px] w-full appearance-none border border-[#8c8c8c] bg-[#e4e4e4] px-[2px] text-[7px] leading-none"><option>所有支持的媒体 (*.264, *.3g2,</option></select>
            <span className="pointer-events-none absolute right-[3px] text-[5px]">▼</span>
          </div>
        </div>
        <div className="flex justify-end gap-[9px]">
          <button type="button" className="flex h-[17px] w-[51px] items-center justify-center border border-[#3c9ad8] bg-[#bfe2f8]"><span className="flex h-[15px] w-[38px] items-center justify-center rounded-[50%] border-2 border-[#2438a8]">打开(O)</span></button>
          <button type="button" className="h-[17px] w-[52px] border border-[#999] bg-linear-to-b from-[#f2f2f2] to-[#d2d2d2]">取消</button>
        </div>
      </div>
    </div>
  );
}

/* ---------- inline toolbars in the notes ---------- */

function GainControl() {
  return (
    <span className="mb-[5px] flex h-[33px] w-[151px] shrink-0 items-center border-r-2 border-t border-black bg-[#333] font-['Open_Sans',sans-serif] font-normal">
      <svg viewBox="0 0 70 32" className="h-[32px] w-[70px]" aria-hidden="true">
        <path d="M0 0H9V32H0Z" fill="#444" />
        <path d="M3 11V23M6 11V23" stroke="#888" strokeDasharray="1 2" />
        <path d="M13 22V21M15.500 22V20M18 22V19M20.500 22V17M23 22V15M25.500 22V12M28.500 22V6" stroke="#aaa" strokeWidth="1.500" />
        <circle cx="47" cy="16" r="11.500" fill="none" stroke="#9a7312" strokeWidth="1.200" />
        <circle cx="47" cy="16" r="9" fill="#747474" stroke="#a5a5a5" />
        <path d="M47 6V16" stroke="#eee" strokeWidth="1.500" />
      </svg>
      <span className="-ml-[6px] border-b-2 border-dotted border-[#c9961a] text-[12px] font-semibold leading-[12px] text-[#c9961a]">+0</span>
      <span className="ml-[3px] text-[12px] font-semibold leading-none text-[#ddd]">dB</span>
      <span className="ml-auto h-[24px] w-px bg-[#555]" />
      <Pin size={11} fill="currentColor" className="mx-[6px] rotate-45 text-[#c9c9c9]" />
    </span>
  );
}

function ZoomStrip() {
  return (
    <span className="mb-[6px] flex h-[32px] w-[333px] shrink-0 items-center justify-between bg-[#3d3d3d] pl-[15px] pr-[6px]">
      {ZOOM_KINDS.map((k, i) => (
        <button key={k} type="button" aria-label={ZOOM_TITLES[k]} className={i === 3 || i === 8 ? "text-[#666]" : "text-[#b5b5b5]"}><ZoomGlyph kind={k} className="size-[24px]" /></button>
      ))}
    </span>
  );
}

export default function App() {
  return (
    <main className="min-h-screen bg-white pb-[84px] pl-[44px] pr-[42px] pt-[49px] font-['Liberation_Serif','Noto_Sans_CJK_SC',serif] text-[17px] font-light leading-[20px] text-black">
      <AuditionWindow status="启动用了 2.03 秒" info={["47.08 GB 空闲"]}>
        <OpenDialog />
      </AuditionWindow>
      <p className="pb-[4px] pl-px pt-[33px]"><span className="font-normal">3</span>、已经导入。时间线的编辑窗口已显示左右声道的波形。</p>
      <AuditionWindow loaded status="读取 Monkey's Audio 完成用时 5.04 秒" info={["44100 Hz • 16 位 • 立体声", "38.42 MB", "3:48.386", "47.00 GB 空闲"]} />
      <p className="pl-px pt-[8px]">备注：</p>
      <p className="flex items-end pt-[7px]"><span className="whitespace-nowrap">这个悬浮控件</span><GainControl /><span className="whitespace-nowrap pl-[8px]">用来调整素材的整体音量（如果素材的音量没有异常，最好不要去调）</span></p>
      <p className="flex items-end pt-[10px]"><span className="whitespace-nowrap">屏幕右下方的这排按钮</span><ZoomStrip /><span className="whitespace-nowrap">用鼠标放上去，可以看到功能提示。</span></p>
    </main>
  );
}
